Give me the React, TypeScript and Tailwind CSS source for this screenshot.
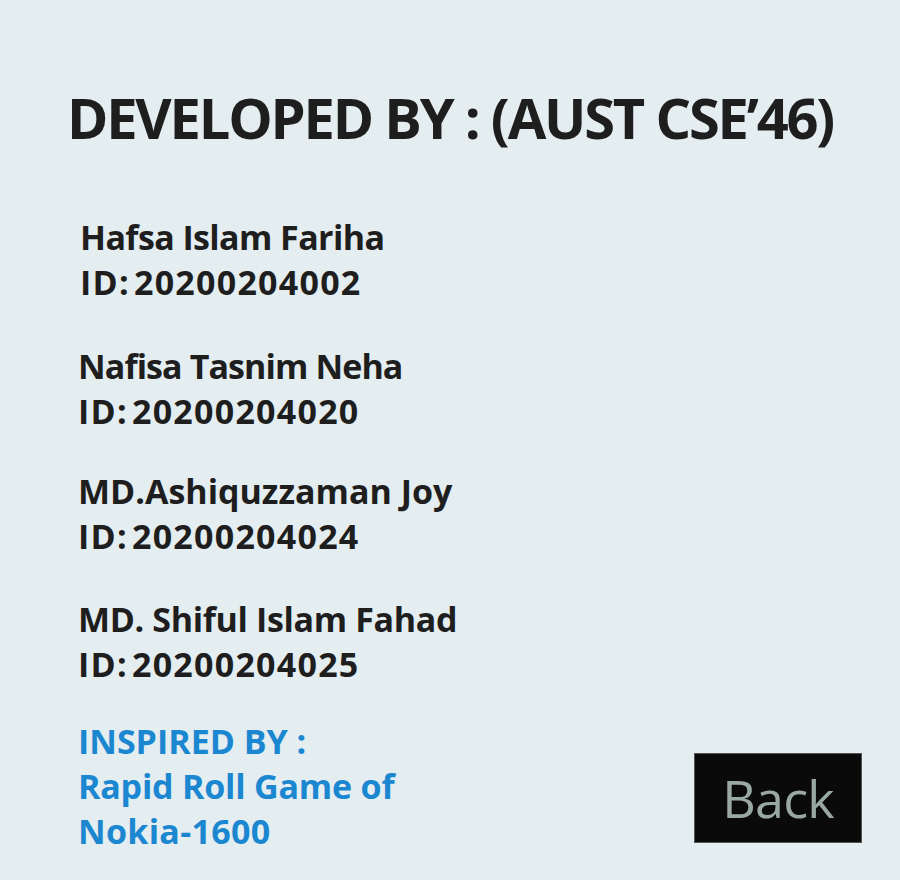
import React from "react";

const people = [
  { name: "Hafsa Islam Fariha", id: "ID: 20200204002", ml: "ml-[80px]", mt: "mt-0", nt: "tracking-[-0.6px]" },
  { name: "Nafisa Tasnim Neha", id: "ID: 20200204020", ml: "ml-[78px]", mt: "mt-[39px]", nt: "tracking-[-0.9px]" },
  { name: "MD.Ashiquzzaman Joy", id: "ID: 20200204024", ml: "ml-[78px]", mt: "mt-[35px]", nt: "tracking-[0px]" },
  { name: "MD. Shiful Islam Fahad", id: "ID: 20200204025", ml: "ml-[78px]", mt: "mt-[38px]", nt: "tracking-[-0.35px]" },
];

export default function App() {
  return (
    <div
      className="w-[900px] h-[880px] bg-[#e4edf0] flex flex-col overflow-hidden"
      style={{ fontFamily: '"Open Sans", "Noto Sans", sans-serif' }}
    >
      <h1 className="mt-[82px] h-[70px] leading-[70px] text-center text-[56px] font-bold text-[#1e1e1e] tracking-[-2.2px]">
        DEVELOPED BY : (AUST CSE’46)
      </h1>
      <div className="mt-[63px] flex flex-col">
        {people.map((p) => (
          <div key={p.id} className={`${p.mt} ${p.ml} flex flex-col text-[34px] leading-[45px] font-bold text-[#1e1e1e]`}>
            <div className={p.nt}>{p.name}</div>
            <div className="tracking-[1.25px] [word-spacing:-6px]">{p.id}</div>
          </div>
        ))}
      </div>
      <div className="mt-[32px] flex items-start justify-between pl-[78px] pr-[38px]">
        <div className="flex flex-col text-[34px] leading-[45px] font-bold text-[#1b87d0]">
          <div>INSPIRED BY :</div>
          <div className="tracking-[-0.2px]">Rapid Roll Game of</div>
          <div className="tracking-[0.3px]">Nokia-1600</div>
        </div>
        <button className="mt-[34px] w-[168px] h-[90px] bg-[#0a0a0a] border border-[#555] flex items-center justify-center text-[52px] text-[#9aa8a3] tracking-[-0.75px]">
          Back
        </button>
      </div>
    </div>
  );
}
